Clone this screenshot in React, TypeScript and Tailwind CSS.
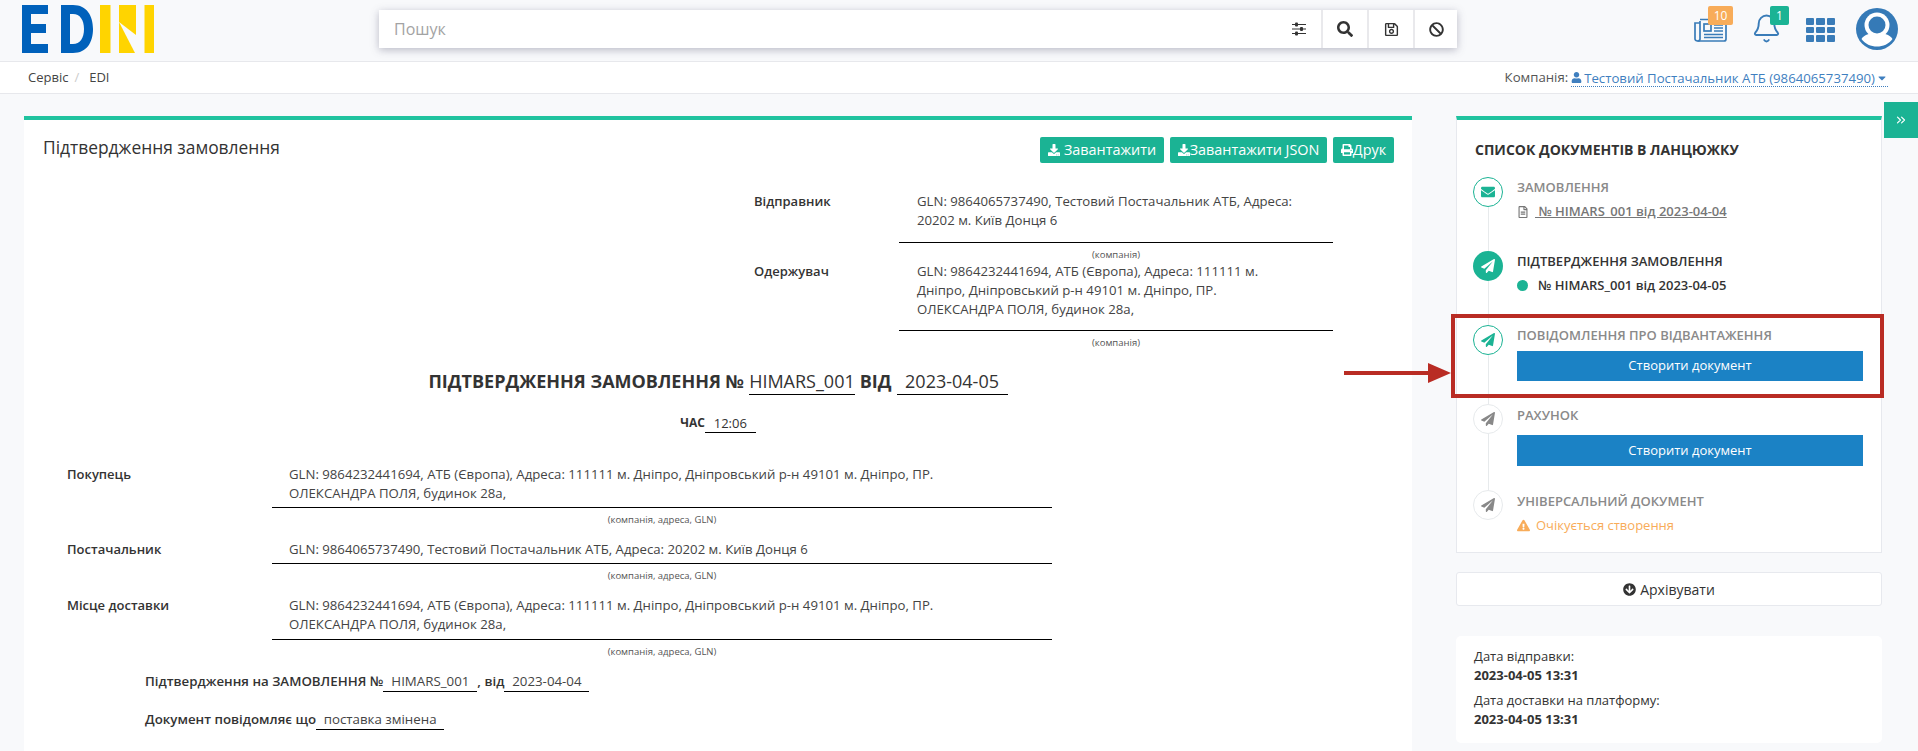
import React from 'react';
import { FaArrowCircleDown, FaBan, FaCaretDown, FaDownload, FaEnvelope, FaExclamationTriangle, FaPaperPlane, FaPrint, FaRegFileAlt, FaRegSave, FaSearch, FaUser } from 'react-icons/fa';
import { Bell, ChevronsRight } from 'lucide-react';

const Logo = () => (
  <svg width="150" height="60" viewBox="0 0 150 60">
    <path d="M7 5H33V14H16V24H31V33H16V44H33V53H7Z" fill="#0061bb" />
    <path fillRule="evenodd" d="M46 5H58C72 5 78 16 78 29C78 42 72 53 58 53H46ZM55 14V44H58C65 44 69 38 69 29C69 20 65 14 58 14Z" fill="#0061bb" />
    <path d="M85 5H95.500V53H85Z" fill="#ffd400" />
    <path d="M104 5H121V35L104 22Z" fill="#ffd400" />
    <path d="M104 22L120 53H104Z" fill="#ffd400" />
    <path d="M129.500 5H139V53H129.500Z" fill="#ffd400" />
  </svg>
);

const SlidersIcon = () => (
  <svg width="14" height="14" viewBox="0 0 14 14" fill="#333">
    <path d="M0 2h14v1H0zM0 6.500h14v1H0zM0 11h14v1H0z" />
    <rect x="3" y="0.500" width="3" height="4" rx="1" />
    <rect x="8" y="5" width="3" height="4" rx="1" />
    <rect x="3" y="9.500" width="3" height="4" rx="1" />
  </svg>
);

const NewsIcon = () => (
  <svg width="33" height="24" viewBox="0 0 33 24" fill="none" stroke="#3a7cb8" strokeWidth="1.700">
    <path d="M6 3V21C6 22 5 23 3.500 23S1 22 1 21V5H6" />
    <path d="M6 1.500H32V21C32 22 31 23 30 23H3.500" />
    <rect x="10" y="6" width="7" height="7" />
    <path d="M20 7H29M20 10H29M20 13H29M10 16.500H29M10 19.500H29" />
  </svg>
);

const Avatar = () => (
  <svg width="42" height="42" viewBox="0 0 42 42">
    <circle cx="21" cy="21" r="21" fill="#357ab7" />
    <circle cx="21" cy="17" r="12.500" fill="#fff" />
    <circle cx="21" cy="17" r="8.500" fill="#357ab7" />
    <path d="M5.500 31C8 27 13 25.500 16 25.500C18 27 24 27 26 25.500C29 25.500 34 27 36.500 31C33 36 27 38.500 21 38.500S9 36 5.500 31Z" fill="#fff" />
  </svg>
);

const GreenButton = ({ width, children }: { width: string; children: React.ReactNode }) => (
  <button className={`${width} h-[26px] bg-[#1bb394] rounded-[2px] text-white text-[14.400px] flex items-center justify-center`}>{children}</button>
);

const Party = ({ label, lines, caption, labelClass, valueClass, after }: { label: string; lines: string[]; caption: string; labelClass: string; valueClass: string; after: string }) => (
  <div className="flex">
    <div className={`${labelClass} font-semibold text-[#333] leading-[19px]`}>{label}</div>
    <div className={valueClass}>
      <div className={`${after} border-b border-black leading-[19px] text-[13.200px] text-[#444]`}>
        {lines.map(l => <div key={l}>{l}</div>)}
      </div>
      <div className="text-center text-[9.500px] leading-[12px] text-[#555] mt-[6px]">{caption}</div>
    </div>
  </div>
);

const Step = ({ icon, height, line = true, children }: { icon: React.ReactNode; height: string; line?: boolean; children: React.ReactNode }) => (
  <div className={`flex ${height}`}>
    <div className="w-[30px] flex flex-col items-center shrink-0">
      {icon}
      {line && <div className="w-[1px] flex-1 bg-[#e7eaec]" />}
    </div>
    <div className="ml-[14px] flex-1">{children}</div>
  </div>
);

const circleTeal = "w-[30px] h-[30px] rounded-full border border-[#1bb394] flex items-center justify-center text-[#1bb394] text-[14px] shrink-0";
const circleGrey = "w-[30px] h-[30px] rounded-full border border-[#e7eaec] flex items-center justify-center text-[#888] text-[14px] shrink-0";
const stepTitle = "text-[13px] font-semibold leading-[20px] text-[#8a8a8a]";

const CreateButton = ({ height }: { height: string }) => (
  <button className={`w-[346px] ${height} bg-[#1b82c5] text-white text-[13px] block`}>Створити документ</button>
);

export default function App() {
  const buyer = ['GLN: 9864232441694, АТБ (Європа), Адреса: 111111 м. Дніпро, Дніпровський р-н 49101 м. Дніпро, ПР.', 'ОЛЕКСАНДРА ПОЛЯ, будинок 28а,'];

  return (
    <div className="relative h-[751px] overflow-hidden bg-[#f8f9fb] font-['Open_Sans',sans-serif] text-[13px] text-[#333]">
      {/* top bar */}
      <header className="h-[62px] border-b border-[#e7e8ec] flex items-start">
        <div className="w-[379px] shrink-0 pl-[15px]"><Logo /></div>
        <div className="w-[1078px] h-[38px] mt-[10px] bg-white shadow-[0_2px_8px_rgba(70,70,100,0.35)] flex items-center">
          <div className="flex-1 pl-[15px] text-[16px] text-[#a3a3a3]">Пошук</div>
          <div className="w-[44px] flex justify-center"><SlidersIcon /></div>
          <div className="w-[46px] h-full border-l-2 border-[#e9e9ec] flex items-center justify-center text-[#333] text-[16px]"><FaSearch /></div>
          <div className="w-[46px] h-full border-l-2 border-[#e9e9ec] flex items-center justify-center text-[#333] text-[15px]"><FaRegSave /></div>
          <div className="w-[44px] h-full border-l-2 border-[#e9e9ec] flex items-center justify-center text-[#333] text-[15px]"><FaBan /></div>
        </div>
        <div className="ml-[237px] w-[33px] mt-[18px] relative">
          <NewsIcon />
          <span className="absolute left-[14px] top-[-12px] w-[25px] h-[19px] bg-[#f8ac59] rounded-[2px] text-white text-[12px] leading-[19px] text-center">10</span>
        </div>
        <div className="ml-[24px] mt-[13px] relative">
          <Bell size={31} strokeWidth={1.500} color="#3a7cb8" />
          <span className="absolute left-[19px] top-[-7px] w-[19px] h-[19px] bg-[#1bb394] rounded-[2px] text-white text-[12px] leading-[19px] text-center">1</span>
        </div>
        <div className="ml-[24px] mt-[18px] w-[29px] grid grid-cols-3 gap-[2px]">
          {[0, 1, 2, 3, 4, 5, 6, 7, 8].map(i => <div key={i} className="h-[6.500px] rounded-[1px] bg-[#3a7cb8]" />)}
        </div>
        <div className="ml-[21px] mt-[8px]"><Avatar /></div>
      </header>

      {/* breadcrumb */}
      <div className="h-[32px] bg-white border-b border-[#e7e8ec] flex items-center pl-[28px] pr-[30px] text-[13px]">
        <span className="text-[#444]">Сервіс</span>
        <span className="mx-[6px] text-[#ccc]">/</span>
        <span className="ml-[4px] text-[#444]">EDI</span>
        <div className="ml-auto flex items-center text-[13.200px]">
          <span className="text-[#555] mr-[3px]">Компанія:</span>
          <span className="flex items-center text-[#3f7fbf] border-b border-dotted border-[#3f7fbf] leading-[16px] translate-y-[1px]">
            <FaUser className="text-[11px] mr-[2px]" />
            Тестовий Постачальник АТБ (9864065737490)
            <FaCaretDown className="text-[12px] ml-[1px]" />
          </span>
        </div>
      </div>

      <main className="flex items-start pl-[24px] pt-[22px]">
        {/* document */}
        <section className="w-[1388px] h-[635px] bg-white border-t-4 border-[#20c39f] shrink-0">
          <div className="flex items-start justify-between pl-[19px] pr-[18px] pt-[17px]">
            <h2 className="text-[17.400px] font-medium leading-[20px] text-[#333]">Підтвердження замовлення</h2>
            <div className="flex gap-[6px]">
              <GreenButton width="w-[124px]"><FaDownload className="text-[12px] mr-[4px]" />Завантажити</GreenButton>
              <GreenButton width="w-[157px]"><FaDownload className="text-[12px]" />Завантажити JSON</GreenButton>
              <GreenButton width="w-[61px]"><FaPrint className="text-[12px]" />Друк</GreenButton>
            </div>
          </div>

          <div className="ml-[730px] mt-[29px] text-[13px]">
            <Party label="Відправник" labelClass="w-[145px]" valueClass="w-[434px]" after="pl-[18px] pb-[12px] pr-[30px]" caption="(компанія)"
              lines={['GLN: 9864065737490, Тестовий Постачальник АТБ, Адреса:', '20202 м. Київ Донця 6']} />
            <div className="h-[1px]" />
            <Party label="Одержувач" labelClass="w-[145px]" valueClass="w-[434px]" after="pl-[18px] pb-[11px] pr-[30px]" caption="(компанія)"
              lines={['GLN: 9864232441694, АТБ (Європа), Адреса: 111111 м.', 'Дніпро, Дніпровський р-н 49101 м. Дніпро, ПР.', 'ОЛЕКСАНДРА ПОЛЯ, будинок 28а,']} />
          </div>

          <div className="flex justify-center items-start mt-[20px] text-[18px] leading-[25px]">
            <span className="font-bold text-[#333]">ПІДТВЕРДЖЕННЯ ЗАМОВЛЕННЯ №</span>
            <span className="ml-[5px] border-b border-black h-[26px] text-[#333]">HIMARS_001</span>
            <span className="font-bold mx-[5px] text-[#333]">ВІД</span>
            <span className="w-[111px] text-center border-b border-black h-[26px] text-[#333]">2023-04-05</span>
          </div>

          <div className="flex justify-center items-start mt-[19px] text-[12px] leading-[18px]">
            <span className="font-bold">ЧАС</span>
            <span className="w-[51px] text-center border-b border-black text-[13px]">12:06</span>
          </div>

          <div className="ml-[43px] mt-[32px]">
            <Party label="Покупець" labelClass="w-[205px]" valueClass="w-[780px]" after="pl-[17px] pb-[4px]" caption="(компанія, адреса, GLN)" lines={buyer} />
            <div className="h-[14px]" />
            <Party label="Постачальник" labelClass="w-[205px]" valueClass="w-[780px]" after="pl-[17px] pb-[4px]" caption="(компанія, адреса, GLN)"
              lines={['GLN: 9864065737490, Тестовий Постачальник АТБ, Адреса: 20202 м. Київ Донця 6']} />
            <div className="h-[14px]" />
            <Party label="Місце доставки" labelClass="w-[205px]" valueClass="w-[780px]" after="pl-[17px] pb-[5px]" caption="(компанія, адреса, GLN)" lines={buyer} />
          </div>

          <div className="ml-[121px] mt-[14px] flex items-start leading-[19px] text-[13.300px]">
            <span className="font-semibold">Підтвердження на ЗАМОВЛЕННЯ №</span>
            <span className="w-[94px] text-center border-b border-black text-[#444]">HIMARS_001</span>
            <span className="font-semibold">, від</span>
            <span className="w-[85px] text-center border-b border-black text-[#444]">2023-04-04</span>
          </div>
          <div className="ml-[121px] mt-[18px] flex items-start leading-[19px] text-[13.300px]">
            <span className="font-semibold">Документ повідомляє що</span>
            <span className="w-[128px] text-center border-b border-black text-[#444]">поставка змінена</span>
          </div>
        </section>

        {/* chain */}
        <aside className="w-[426px] ml-[44px] shrink-0">
          <div className="h-[437px] bg-white border-x border-b border-[#e7e9ee] border-t-4 border-t-[#20c39f] pl-[16px]">
            <h3 className="mt-[20px] ml-[2px] text-[14px] font-bold leading-[20px] text-[#333]">СПИСОК ДОКУМЕНТІВ В ЛАНЦЮЖКУ</h3>
            <div className="mt-[17px]">
              <Step height="h-[74px]" icon={<div className={circleTeal}><FaEnvelope /></div>}>
                <div className={stepTitle}>ЗАМОВЛЕННЯ</div>
                <div className="mt-[5px] flex items-center text-[#777] text-[13px] font-semibold">
                  <FaRegFileAlt className="text-[12px] mr-[6px]" />
                  <span className="underline whitespace-pre"> № HIMARS_001 від 2023-04-04</span>
                </div>
              </Step>
              <Step height="h-[74px]" icon={<div className="w-[30px] h-[30px] rounded-full bg-[#1bb394] flex items-center justify-center text-white text-[14px] shrink-0"><FaPaperPlane /></div>}>
                <div className="text-[13px] font-semibold leading-[20px] text-[#333]">ПІДТВЕРДЖЕННЯ ЗАМОВЛЕННЯ</div>
                <div className="mt-[5px] flex items-center text-[13px] font-semibold text-[#333]">
                  <span className="w-[11px] h-[11px] rounded-full bg-[#1bb394] mr-[10px]" /> № HIMARS_001 від 2023-04-05
                </div>
              </Step>
              <Step height="h-[79px]" icon={<div className={circleTeal}><FaPaperPlane /></div>}>
                <div className={stepTitle}>ПОВІДОМЛЕННЯ ПРО ВІДВАНТАЖЕННЯ</div>
                <div className="mt-[6px]"><CreateButton height="h-[30px]" /></div>
              </Step>
              <Step height="h-[86px]" icon={<div className={circleGrey}><FaPaperPlane /></div>}>
                <div className={`${stepTitle} pt-[1px]`}>РАХУНОК</div>
                <div className="mt-[10px]"><CreateButton height="h-[31px]" /></div>
              </Step>
              <Step height="h-[50px]" line={false} icon={<div className={circleGrey}><FaPaperPlane /></div>}>
                <div className={`${stepTitle} pt-[1px]`}>УНІВЕРСАЛЬНИЙ ДОКУМЕНТ</div>
                <div className="mt-[5px] flex items-center text-[13px] text-[#f8ac59]">
                  <FaExclamationTriangle className="text-[13px] mr-[6px]" /> Очікується створення
                </div>
              </Step>
            </div>
          </div>

          <button className="mt-[19px] w-full h-[34px] bg-white border border-[#e7e9ee] rounded-[3px] flex items-center justify-center text-[14px] text-[#333]">
            <FaArrowCircleDown className="text-[13px] mr-[4px]" />Архівувати
          </button>

          <div className="mt-[30px] h-[107px] bg-white rounded-[5px] px-[18px] pt-[11px] text-[13px] leading-[18.500px]">
            <div>Дата відправки:</div>
            <div className="font-bold">2023-04-05 13:31</div>
            <div className="mt-[7px]">Дата доставки на платформу:</div>
            <div className="font-bold">2023-04-05 13:31</div>
          </div>
        </aside>
      </main>

      {/* side toggle */}
      <button className="absolute right-0 top-[102px] w-[34px] h-[36px] bg-[#1bb394] text-white flex items-start justify-center pt-[11px]">
        <ChevronsRight size={14} />
      </button>

      {/* annotation over the chain */}
      <div className="absolute left-[1451px] top-[314px] w-[433px] h-[84px] border-4 border-[#b92c24]" />
      <svg className="absolute left-[1344px] top-[362px]" width="108" height="22" viewBox="0 0 108 22" fill="#b92c24">
        <path d="M0 9H84V1L107 11L84 21V13H0Z" />
      </svg>
    </div>
  );
}
